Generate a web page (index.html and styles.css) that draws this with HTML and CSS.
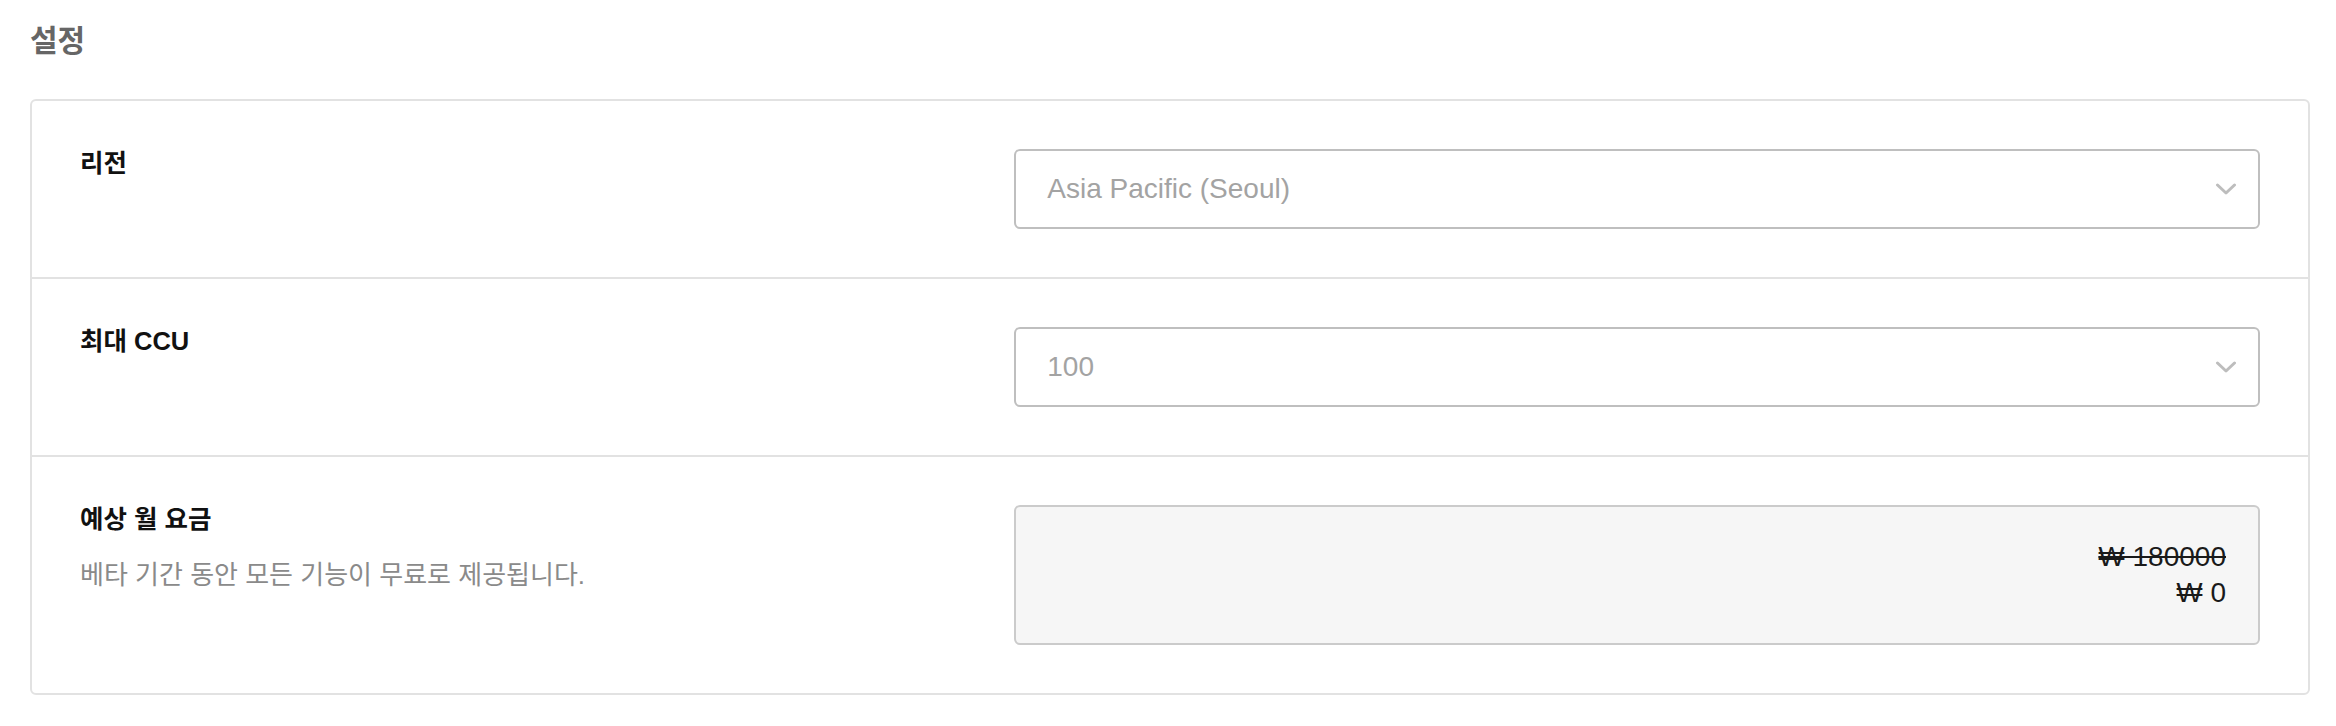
FILE: index.html
```html
<!DOCTYPE html>
<html lang="ko">
<head>
<meta charset="utf-8">
<title>설정</title>
<link rel="stylesheet" href="styles.css">
</head>
<body>
<main class="page">
  <h2 class="title">설정</h2>
  <section class="card">
    <div class="row">
      <div class="label-col">
        <div class="label">리전</div>
      </div>
      <div class="field-col">
        <div class="select">
          <span class="select-value">Asia Pacific (Seoul)</span>
          <svg class="chevron" width="22" height="12" viewBox="0 0 22 12" aria-hidden="true"><path d="M2.5 2 L11 10 L19.5 2"/></svg>
        </div>
      </div>
    </div>
    <div class="row">
      <div class="label-col">
        <div class="label">최대 CCU</div>
      </div>
      <div class="field-col">
        <div class="select">
          <span class="select-value">100</span>
          <svg class="chevron" width="22" height="12" viewBox="0 0 22 12" aria-hidden="true"><path d="M2.5 2 L11 10 L19.5 2"/></svg>
        </div>
      </div>
    </div>
    <div class="row">
      <div class="label-col">
        <div class="label">예상 월 요금</div>
        <p class="desc">베타 기간 동안 모든 기능이 무료로 제공됩니다.</p>
      </div>
      <div class="field-col">
        <div class="price">
          <div class="price-old">₩ 180000</div>
          <div class="price-new">₩ 0</div>
        </div>
      </div>
    </div>
  </section>
</main>
</body>
</html>
```

FILE: styles.css
```css
* { box-sizing: border-box; }

html, body {
  margin: 0;
  padding: 0;
  background: #ffffff;
}

body {
  font-family: "Liberation Sans", "Noto Sans CJK KR", sans-serif;
  color: #111111;
}

.page {
  padding: 23px 26px 0 30px;
}

.title {
  margin: 0;
  font-size: 30px;
  line-height: 36px;
  font-weight: 600;
  color: #666666;
}

.card {
  margin-top: 40px;
  border: 2px solid #e2e2e2;
  border-radius: 6px;
  background: #ffffff;
}

.row {
  display: grid;
  grid-template-columns: 3fr 4fr;
  padding: 48px;
  border-bottom: 2px solid #e2e2e2;
}

.row:last-child {
  border-bottom: none;
}

.label {
  font-size: 25.5px;
  line-height: 29px;
  font-weight: 600;
  color: #111111;
}

.desc {
  margin: 23px 0 0 0;
  font-size: 26px;
  line-height: 36px;
  color: #8a8a8a;
}

.select {
  height: 80px;
  border: 2px solid #bfbfbf;
  border-radius: 6px;
  padding: 0 21px 0 31px;
  display: flex;
  align-items: center;
  justify-content: space-between;
  background: #ffffff;
}

.select-value {
  font-size: 28px;
  color: #a3a3a3;
}

.chevron {
  display: block;
}

.chevron path {
  fill: none;
  stroke: #bdbdbd;
  stroke-width: 3;
  stroke-linecap: round;
  stroke-linejoin: round;
}

.price {
  height: 140px;
  border: 2px solid #cbcbcb;
  border-radius: 6px;
  background: #f6f6f6;
  padding: 32px 32px;
  text-align: right;
  font-size: 28px;
  line-height: 36px;
  color: #1a1a1a;
}

.price-old {
  text-decoration: line-through;
}
```
